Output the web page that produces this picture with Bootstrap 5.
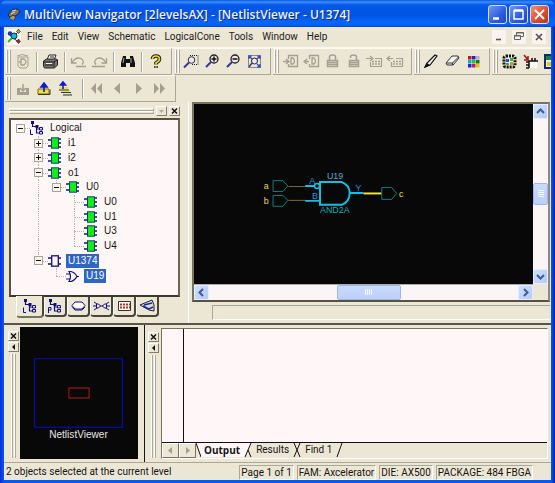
<!DOCTYPE html>
<html lang="en">
<head>
<meta charset="utf-8">
<meta name="viewport" content="width=device-width, initial-scale=1">
<title>MultiView Navigator</title>
<link href="https://cdn.jsdelivr.net/npm/bootstrap@5.3.0/dist/css/bootstrap.min.css" rel="stylesheet">
<style>
:root{--face:#ece6d5;--paper:#fff7f7;--ink:#0a0a0a;--lo:#aca899;--frame:#0a3fe0}
body{font:10px/12px Roboto,"Liberation Sans",sans-serif;color:#151515;background:#0650e8;min-height:100vh}
button{font:inherit;color:inherit;background:none;border:0;padding:0}
svg{display:block;flex:none}
.shell{min-height:100vh;padding:0 4px 3px;border-radius:7px 7px 0 0;background:linear-gradient(90deg,#0030d8 0,#0a58f0 4px,#0a58f0 calc(100% - 4px),#0020b0 100%);border-bottom:0}
.titlebar{height:27px;margin:0 -4px;padding:2px 6px 0 7px;background:linear-gradient(#0a58d8 0,#3a8cff 2px,#0458e8 5px,#0054e4 15px,#0566fa 22px,#0563f4 25px,#0040c8 27px);border-radius:7px 7px 0 0}
.titlebar h1{font:600 12px/16px "Open Sans",sans-serif;color:#eef2fb;text-shadow:1px 1px #0a2a80;margin:0 0 0 3px}
.wbtns{gap:2px}
.wbtn{width:19px;height:19px;border:1px solid #d5e0f8;border-radius:3px;background:linear-gradient(135deg,#7098f0,#2a5ce0 60%,#2048c8)}
.wbtn.end{background:linear-gradient(135deg,#f09078,#dc4a28 60%,#b83818)}
.client{background:var(--face)}
.menurow{height:20px;padding:0 5px 1px 3px}
.menurow nav{gap:9px;margin-left:6px}
.menurow a{color:#222;text-decoration:none}
.mdi{gap:6px}
.mdi button{width:14px;height:14px;background:#f9f3ef}
.bars{border-top:1px solid #fbf8f0}
.band{height:27px;gap:2px;padding-left:1px}
.tgroup{padding-right:5px;border-right:1px solid var(--lo);border-bottom:1px solid var(--lo);border-top:1px solid #fdfaf4}
.grip{width:7px;padding:1px;gap:1px}
.grip i{width:3px;border-left:1px solid #fff;border-right:1px solid var(--lo)}
.tb{width:21px;height:21px}
.tb:disabled{color:#a3a091}
.vsep{width:7px}
.vsep::before{content:"";display:block;width:2px;height:20px;margin:0 auto;border-left:1px solid var(--lo);border-right:1px solid #fff}
.work{flex:1 0 216px}
.dock{width:185px;flex:none;border-right:1px solid #fff;padding:2px 8px 3px 5px}
.dockhead{height:13px;gap:2px}
.hgrip{height:3px;border:1px solid var(--lo);border-top-color:#fff;border-left-color:#fff}
.mini{width:11px;height:10px;border:1px solid #fff;border-right-color:#817d70;border-bottom-color:#817d70;background:var(--face)}
.tree{flex:1;border:1px solid var(--lo);border-top:2px solid #55523f;border-left:2px solid #55523f;border-right:2px solid #6b6757;border-bottom:2px solid #3c392c;background:var(--paper);font-family:"Liberation Sans",sans-serif;padding:1px 0 12px 1px;margin:1px 0 0}
.tree li{flex:1;min-height:14px}
.cell{width:18px;flex:none;align-self:stretch;position:relative;display:flex;align-items:center}
.cell.v::before,.cell.e::before{content:"";position:absolute;left:8px;top:0;bottom:0;border-left:1px dotted #b9b5ae}
.cell.e::before{bottom:50%}
.cell.h::after{content:"";position:absolute;left:8px;right:0;top:50%;border-top:1px dotted #b9b5ae}
.exp{position:absolute;left:4px;top:3px;width:9px;height:9px;border:1px solid #a9a596;background:#faf5ee;z-index:1}
.exp::before{content:"";position:absolute;left:1px;top:3px;width:5px;height:1px;background:#111}
.exp.plus::after{content:"";position:absolute;left:3px;top:1px;width:1px;height:5px;background:#111}
.lbl{padding:1px 2px}
.lbl.sel{background:#2f66c4;color:#fff}
.ptabs{padding-left:7px;height:23px}
.ptabs button{width:23px;height:20px;border-right:2px solid #4a473a;border-bottom:2px solid #4a473a;border-left:1px solid #fff;border-radius:0 0 4px 4px}
.ptabs button.on{width:28px;height:22px;margin-top:-1px;background:var(--face);border-bottom-color:#77735f}
.ptabs button svg{margin:auto}
.viewer{padding:0 0 0 3px}
.screen{flex:1;margin-right:1px;border:2px solid #77735f;border-right-color:#8f8b7c;border-bottom-color:#55523f;background:var(--face)}
.canvas{background:#080808;min-height:0;min-width:0;flex:1;position:relative}
.canvas svg{position:absolute;inset:0;width:100%;height:100%}
.sbar{background:#fbf5f5}
.sbar.vert{width:15px}
.sbar.hor{height:16px;margin-right:15px;border-top:1px solid #aaa}
.before{flex:11 0 0}
.after{flex:10 0 0}
.sb{width:15px;height:15px;flex:none;border:1px solid #e4ecff;border-radius:2px;background:linear-gradient(135deg,#cfdeff,#b4cbfb)}
.thumb{background:linear-gradient(#c9d9ff,#bdd0fb);border:1px solid #9db6ee;border-radius:2px;flex:none}
.pathfield{height:15px;margin:3px 1px 3px 20px;border:1px solid var(--lo);border-right:0;border-bottom-color:#fff}
.lower{flex:0 0 138px;border-top:2px solid #57554c}
.sidegrip{width:11px;flex:none;gap:1px}
.nav-pane{width:141px;flex:none;padding:2px 6px 3px 4px;border-right:1px solid #151515}
.radar{background:#080808;margin-left:1px}
.radar svg{width:100%;height:100%}
.log-pane{padding:3px 3px 3px 3px}
.logbox{border:1px solid #77735f;border-right-color:#fff;border-bottom-color:#fff;margin-left:2px}
.logtext{background:var(--paper);border-bottom:1px solid #111}
.gutter{width:22px;border-right:1px solid #111}
.logtext textarea{resize:none;border:0;background:none;outline:0;padding:2px}
.otabs{height:15px}
.otabs .nb{width:17px;border:1px solid #fff;border-right-color:#77735f;border-bottom-color:#77735f;color:#a3a091}
.otabs .ot{height:14px;padding:0 3px}
.otabs .ot.on{background:var(--paper);font:700 10px/12px "Open Sans",sans-serif}
.status{height:18px;border-top:1px solid var(--lo);padding:1px 18px 0 2px;gap:3px}
.status output{border:1px solid var(--lo);border-right-color:#fff;border-bottom-color:#fff;padding:0 1px;height:15px;line-height:13px;white-space:nowrap}
</style>
<script src="https://cdn.jsdelivr.net/npm/bootstrap@5.3.0/dist/js/bootstrap.bundle.min.js"></script>
</head>
<body>
<svg width="0" height="0" class="position-absolute" aria-hidden="true">
  <symbol id="chip" viewBox="0 0 14 12"><path d="M0 3h4M0 9h4M10 2h3M10 6h3M10 10h3" stroke="#10107c" stroke-width="1.6"/><rect x="3.5" y=".8" width="7" height="10.4" fill="#12ee12" stroke="#10407c"/></symbol>
  <symbol id="gchip" viewBox="0 0 14 12"><path d="M0 3h4M0 9h4M10 3h3M10 9h3" stroke="#10107c" stroke-width="1.4"/><rect x="3.7" y=".8" width="6.6" height="10.4" fill="#fff7f7" stroke="#10107c" stroke-width="1.3"/></symbol>
  <symbol id="tiers" viewBox="0 0 14 14"><path d="M2.500 2v3.500h4V12H10M6.500 8H10" fill="none" stroke="#10107c" stroke-width="1.2"/><path d="M1 0h3v3H1zM5.500 4h3v3h-3z" fill="#10107c"/><path d="M9.500 6.500h3v2.500h-3zM9.500 10.500h3V13h-3z" fill="#dde" stroke="#10107c"/></symbol>
  <symbol id="hier" viewBox="0 0 14 14"><use href="#tiers"/><path d="M.5 8.500v5H3" fill="none" stroke="#10107c"/></symbol>
  <symbol id="phys" viewBox="0 0 14 14"><use href="#tiers"/><path d="M.5 14V8.500H3V11H.5" fill="none" stroke="#10107c"/></symbol>
</svg>
<div class="shell d-flex flex-column">
  <header class="titlebar d-flex align-items-center">
    <svg width="14" height="15" viewBox="0 0 14 15"><path d="M1 8l4-5 5-1 3 2-3 4-6 3z" fill="#7d7766" stroke="#2c2a28"/><path d="M2 11l4-3 3 2-2 3" fill="#b49a60" stroke="#333"/><path d="M5 4l4-1M4 7l4-2" stroke="#ddd"/></svg>
    <h1 class="flex-grow-1 text-nowrap">MultiView Navigator [2levelsAX] - [NetlistViewer - U1374]</h1>
    <div class="wbtns d-flex">
      <button class="wbtn" aria-label="Minimize"><svg width="17" height="17"><path d="M4 12.500h6" stroke="#fff" stroke-width="2.500"/></svg></button>
      <button class="wbtn" aria-label="Maximize"><svg width="17" height="17"><path d="M4 5h9v8H4zM4 4h9" fill="none" stroke="#fff" stroke-width="1.500"/></svg></button>
      <button class="wbtn end" aria-label="Close"><svg width="17" height="17"><path d="M4 4l9 9M13 4l-9 9" stroke="#fff" stroke-width="2"/></svg></button>
    </div>
  </header>
  <div class="client d-flex flex-column flex-grow-1">
    <div class="menurow d-flex align-items-center">
      <svg width="14" height="16" viewBox="0 0 14 16"><path fill="#fdfaf6" d="M0 0h14v16H0z"/><path d="M1 13l11-11M2 5l9 8" stroke="#222"/><path d="M1 13l5-5" stroke="#1c1" stroke-width="2"/><circle cx="3" cy="4.500" r="2.300" fill="#1838c0"/><circle cx="7" cy="7" r="3" fill="#18b8d8" stroke="#135"/><path d="M11.500 0l2 2.500-2 2-2-2z" fill="#b8a020" stroke="#222" stroke-width=".6"/><path d="M11.500 10l2 2.500-2 2-2-2z" fill="#c01818" stroke="#222" stroke-width=".6"/></svg>
      <nav class="d-flex flex-grow-1"><a href="#">File</a><a href="#">Edit</a><a href="#">View</a><a href="#">Schematic</a><a href="#">LogicalCone</a><a href="#">Tools</a><a href="#">Window</a><a href="#">Help</a></nav>
      <div class="mdi d-flex">
        <button aria-label="Minimize document"><svg width="14" height="14"><path d="M4 9.500h5" stroke="#555" stroke-width="1.600"/></svg></button>
        <button aria-label="Restore document"><svg width="14" height="14"><path d="M4.500 5V2.500h7v4H9M2.500 5.500h6v4h-6zM4 3h8M2 6h7" fill="none" stroke="#66645c"/></svg></button>
        <button aria-label="Close document"><svg width="14" height="14"><path d="M4 4l6 6M10 4l-6 6" stroke="#55534c" stroke-width="1.700"/></svg></button>
      </div>
    </div>
    <div class="bars overflow-hidden">
      <div class="band d-flex" role="toolbar" aria-label="Standard">
        <div class="tgroup d-flex align-items-center flex-shrink-0"><span class="grip d-flex align-self-stretch"><i></i><i></i></span>
          <button class="tb" disabled aria-label="Commit"><svg width="21" height="21" fill="none" stroke="currentColor"><path d="M6 6h10v9l-2 2H8l-2-2zM5 5q5-3 11 0"/><path d="M9 8h3q2 1.500 2 3t-2 3H9zM9 11H7" stroke-width="1.300"/></svg></button><span class="vsep"></span>
          <button class="tb" aria-label="Print"><svg width="21" height="21" stroke="#222"><path d="M7 9l2-5h7l-2 5" fill="#fff"/><path d="M3.500 10l3-2h10l1 1v5l-3 3h-10l-1-2z" fill="#77756c"/><path d="M4 11h10l3-2M14 11v5M5 14h8M10 6h4" fill="none"/><path d="M6 12.500h6" stroke="#eee"/></svg></button><span class="vsep"></span>
          <button class="tb" disabled aria-label="Undo"><svg width="21" height="21" fill="none" stroke="currentColor" stroke-width="1.300"><path d="M3.500 7v5h5M4 11.500q4-6 9-4 4 3 1 6M8 15.500h10"/></svg></button>
          <button class="tb" disabled aria-label="Redo"><svg width="21" height="21" fill="none" stroke="currentColor" stroke-width="1.300"><path d="M17.500 7v5h-5M17 11.500q-4-6-9-4-4 3-1 6M3 15.500h13"/></svg></button><span class="vsep"></span>
          <button class="tb" aria-label="Find"><svg width="21" height="21"><path d="M6 5h3v3h4V5h3l2 7v4h-5v-4h-4v4H4v-4z" fill="#111"/><path d="M7 7l-1 5M14 7v5" stroke="#aaa"/></svg></button><span class="vsep"></span>
          <button class="tb" aria-label="Help"><svg width="21" height="21" fill="none"><path d="M7.500 8q0-3 3.500-3t3.500 3q0 2-3.500 4v1.500M11 15v2" stroke="#222" stroke-width="3.600"/><path d="M7.500 8q0-3 3.500-3t3.500 3q0 2-3.500 4v1.500M11 15.200v1.500" stroke="#e8dc20" stroke-width="1.600"/></svg></button>
        </div>
        <div class="tgroup d-flex align-items-center flex-shrink-0"><span class="grip d-flex align-self-stretch"><i></i><i></i></span>
          <button class="tb" aria-label="Zoom area"><svg width="21" height="21" fill="none"><path d="M9 4.500h8v9h-7" stroke="#222" stroke-dasharray="1 1"/><circle cx="10.500" cy="9" r="3.300" fill="#e8e8ee" stroke="#333"/><path d="M8 11.500l-5 5" stroke="#34389c" stroke-width="2"/></svg></button>
          <button class="tb" aria-label="Zoom in"><svg width="21" height="21" fill="none"><circle cx="12" cy="8" r="4" fill="#e8e8ee" stroke="#222" stroke-width="1.300"/><path d="M9.500 8h5M12 5.500v5" stroke="#111" stroke-width="1.500"/><path d="M9 11l-5 5" stroke="#34389c" stroke-width="2"/></svg></button>
          <button class="tb" aria-label="Zoom out"><svg width="21" height="21" fill="none"><circle cx="12" cy="8" r="4" fill="#e8e8ee" stroke="#222" stroke-width="1.300"/><path d="M9.500 8h5" stroke="#111" stroke-width="1.500"/><path d="M9 11l-5 5" stroke="#34389c" stroke-width="2"/></svg></button>
          <button class="tb" aria-label="Zoom to fit"><svg width="21" height="21" fill="none"><path d="M4.500 4.500h12v12h-12z" stroke="#333" stroke-dasharray="1 1"/><path d="M5 8V5h3M13 5h3v3M16 13v3h-3M5 5l3 3M16 5l-3 3M16 16l-3-3" stroke="#2446c8" stroke-width="1.200"/><circle cx="10.500" cy="10" r="3" fill="#e8e8ee" stroke="#222"/><path d="M8 12l-3 4" stroke="#34389c" stroke-width="1.600"/></svg></button>
        </div>
        <div class="tgroup d-flex align-items-center flex-shrink-0"><span class="grip d-flex align-self-stretch"><i></i><i></i></span>
          <button class="tb" disabled aria-label="Push down"><svg width="21" height="21" fill="none" stroke="currentColor"><path d="M8.500 8V4.500h9v11h-9V13M3 10.500h5M6 8l3 2.500L6 13M11 7h2q3 3.500 0 6h-2z" stroke-width="1.300"/></svg></button>
          <button class="tb" disabled aria-label="Pop up"><svg width="21" height="21" fill="none" stroke="currentColor"><path d="M8.500 8V4.500h9v11h-9V13M3 10.500h5M6 8l-3 2.500L6 13M11 7h2q3 3.500 0 6h-2z" stroke-width="1.300"/></svg></button>
          <button class="tb" disabled aria-label="Lock"><svg width="21" height="21" fill="none" stroke="currentColor"><path d="M7.500 9V6q0-2 3-2t3 2v3M5.500 9.500h10v6h-10zM6 11.500h9M6 13.500h9" stroke-width="1.500"/></svg></button>
          <button class="tb" disabled aria-label="Unlock"><svg width="21" height="21" fill="none" stroke="currentColor"><path d="M7.500 7V6q0-2 3-2t3 2v3M6.500 9.500h9v6h-9zM7 11.500h8M7 13.500h8" stroke-width="1.500"/></svg></button>
          <button class="tb" disabled aria-label="Add to list"><svg width="21" height="21" fill="none" stroke="currentColor"><path d="M2 7.500h6M6 5l3 2.500L6 10M11 7.500h6.500v8h-11V11" stroke-width="1.200"/><path d="M8 10.500h8M8 13h8" stroke-width="1.500" stroke-dasharray="2 1"/></svg></button>
          <button class="tb" disabled aria-label="Remove from list"><svg width="21" height="21" fill="none" stroke="currentColor"><path d="M2 7.500h6M5 5L2 7.500 5 10M11 7.500h6.500v8h-11V11" stroke-width="1.200"/><path d="M8 10.500h8M8 13h8" stroke-width="1.500" stroke-dasharray="2 1"/></svg></button>
        </div>
        <div class="tgroup d-flex align-items-center flex-shrink-0"><span class="grip d-flex align-self-stretch"><i></i><i></i></span>
          <button class="tb" aria-label="Highlight"><svg width="21" height="21"><path d="M4 16l2-4 8-8 2 1-7 9z" fill="#f4f0ea" stroke="#111" stroke-width="1.200"/><path d="M3 17l3-5 3 2z" fill="#111"/></svg></button>
          <button class="tb" aria-label="Erase"><svg width="21" height="21"><path d="M4 12l6-7h6l1 2-6 7H5z" fill="#f8f4ee" stroke="#333"/><path d="M4.500 12h6l6-6M10.500 12v2" fill="none" stroke="#333"/></svg></button>
          <button class="tb" aria-label="Colours"><svg width="21" height="21"><path fill="#c01818" d="M5 5h3.500v3.500H5z"/><path fill="#1828d0" d="M9 5h3.500v3.500H9z"/><path fill="#c8a0d8" d="M13 5h3.500v3.500H13z"/><path fill="#18a8d0" d="M5 9h3.500v3.500H5z"/><path fill="#20c820" d="M9 9h3.500v3.500H9z"/><path fill="#187818" d="M13 9h3.500v3.500H13z"/><path fill="#1828d0" d="M5 13h3.500v3.500H5z"/><path fill="#c81860" d="M9 13h3.500v3.500H9z"/><path fill="#e0c020" d="M13 13h3.500v3.500H13z"/></svg></button>
        </div>
        <div class="tgroup d-flex align-items-center flex-shrink-0 border-end-0"><span class="grip d-flex align-self-stretch"><i></i><i></i></span>
          <button class="tb" aria-label="Chip view"><svg width="21" height="21"><rect x="5" y="5" width="11" height="11" rx="2" fill="#f4ecd8" stroke="#111" stroke-width="3" stroke-dasharray="2 1"/><path fill="#2050d0" d="M7 8h3v3H7z"/><path fill="#20b840" d="M11 7h3v3h-3zM7 12h3v2H7z"/><path fill="#e09020" d="M11 11h3v3h-3z"/></svg></button>
          <button class="tb" aria-label="Cross probe"><svg width="21" height="21" fill="none"><path d="M4 4l4 5M8 5v4H4" stroke="#a81818" stroke-width="1.600"/><path d="M9 10h8v7H9z" fill="#fffafa"/><path d="M9 17v-7h9M6 11h3M6 14h3M6 17h3M12 7v3M15 7v3" stroke="#111" stroke-width="1.500"/></svg></button>
          <button class="tb" aria-label="Floorplan"><svg width="21" height="21"><path fill="#eee" stroke="#112a70" stroke-width="2" d="M4 4h14v13H4z"/><path fill="#208030" d="M5 5h6v4H5z"/><path fill="#e0c820" d="M6 11h5v4H6z"/></svg></button>
        </div>
      </div>
      <div class="band d-flex" role="toolbar" aria-label="Navigation">
        <div class="tgroup d-flex align-items-center flex-shrink-0"><span class="grip d-flex align-self-stretch"><i></i><i></i></span>
          <button class="tb" disabled aria-label="Descend"><svg width="21" height="21"><path d="M5 10h3v4h6v-4h3v7H5z" fill="currentColor"/><path d="M11 6v6M8 10l3 3 3-3" fill="none" stroke="currentColor" stroke-width="1.500"/></svg></button>
          <button class="tb" aria-label="Ascend"><svg width="21" height="21"><path d="M5 11h11v5H5z" fill="#f0e040" stroke="#776a20"/><path d="M5 16.500h12v-5" fill="none" stroke="#333"/><path d="M11 14V6M8 9l3-4 3 4z" fill="#1018d0" stroke="#1018d0" stroke-width="1.600"/></svg></button>
          <button class="tb" aria-label="Ascend to top"><svg width="21" height="21"><path d="M5 9h9v3H5zM7 12.500h9v2H7zM9 15.500h9v2H9z" fill="#f0e040"/><path d="M5 12h10M7 14.500h10M9 17h9" stroke="#223a80"/><path d="M9 11V5M6.500 7L9 4l2.500 3z" fill="#1018d0" stroke="#1018d0" stroke-width="1.600"/></svg></button><span class="vsep ms-1"></span>
          <button class="tb" disabled aria-label="First page"><svg width="21" height="21" fill="currentColor"><path d="M10 5v11l-5-5.500zM16 5v11l-5-5.500z"/></svg></button>
          <button class="tb" disabled aria-label="Previous page"><svg width="21" height="21" fill="currentColor"><path d="M13 5v11l-6-5.500z"/></svg></button>
          <button class="tb" disabled aria-label="Next page"><svg width="21" height="21" fill="currentColor"><path d="M8 5v11l6-5.500z"/></svg></button>
          <button class="tb" disabled aria-label="Last page"><svg width="21" height="21" fill="currentColor"><path d="M5 5v11l5-5.500zM11 5v11l5-5.500z"/></svg></button>
        </div>
      </div>
    </div>
    <main class="work d-flex">
      <aside class="dock d-flex flex-column">
        <div class="dockhead d-flex align-items-center">
          <div class="flex-grow-1"><div class="hgrip"></div><div class="hgrip"></div></div>
          <button class="mini" aria-label="Dock menu"><svg width="9" height="8"><path d="M2 3h5L4.500 6z" fill="#b0ac9e"/></svg></button>
          <button class="mini" aria-label="Close dock"><svg width="9" height="8"><path d="M2 1.500l5 5M7 1.500l-5 5" stroke="#111" stroke-width="1.500"/></svg></button>
        </div>
        <ul class="tree list-unstyled d-flex flex-column" role="tree">
          <li class="d-flex align-items-center"><span class="cell h"><i class="exp"></i></span><span class="cell"><svg width="14" height="14"><use href="#hier"/></svg></span><span class="lbl">Logical</span></li>
          <li class="d-flex align-items-center"><span class="cell"></span><span class="cell v h"><i class="exp plus"></i></span><span class="cell"><svg width="14" height="12"><use href="#chip"/></svg></span><span class="lbl">i1</span></li>
          <li class="d-flex align-items-center"><span class="cell"></span><span class="cell v h"><i class="exp plus"></i></span><span class="cell"><svg width="14" height="12"><use href="#chip"/></svg></span><span class="lbl">i2</span></li>
          <li class="d-flex align-items-center"><span class="cell"></span><span class="cell v h"><i class="exp"></i></span><span class="cell"><svg width="14" height="12"><use href="#chip"/></svg></span><span class="lbl">o1</span></li>
          <li class="d-flex align-items-center"><span class="cell"></span><span class="cell v"></span><span class="cell e h"><i class="exp"></i></span><span class="cell"><svg width="14" height="12"><use href="#chip"/></svg></span><span class="lbl">U0</span></li>
          <li class="d-flex align-items-center"><span class="cell"></span><span class="cell v"></span><span class="cell"></span><span class="cell v h"></span><span class="cell"><svg width="14" height="12"><use href="#chip"/></svg></span><span class="lbl">U0</span></li>
          <li class="d-flex align-items-center"><span class="cell"></span><span class="cell v"></span><span class="cell"></span><span class="cell v h"></span><span class="cell"><svg width="14" height="12"><use href="#chip"/></svg></span><span class="lbl">U1</span></li>
          <li class="d-flex align-items-center"><span class="cell"></span><span class="cell v"></span><span class="cell"></span><span class="cell v h"></span><span class="cell"><svg width="14" height="12"><use href="#chip"/></svg></span><span class="lbl">U3</span></li>
          <li class="d-flex align-items-center"><span class="cell"></span><span class="cell v"></span><span class="cell"></span><span class="cell e h"></span><span class="cell"><svg width="14" height="12"><use href="#chip"/></svg></span><span class="lbl">U4</span></li>
          <li class="d-flex align-items-center"><span class="cell"></span><span class="cell e h"><i class="exp"></i></span><span class="cell"><svg width="14" height="12"><use href="#gchip"/></svg></span><span class="lbl sel">U1374</span></li>
          <li class="d-flex align-items-center"><span class="cell"></span><span class="cell"></span><span class="cell e h"></span><span class="cell"><svg width="14" height="12"><path d="M0 4h4M0 9h4M10 6.500h3" stroke="#10107c"/><path d="M3 1.500h2q4 1 6 5-2 4-6 5H3q3-5 0-10z" fill="#fff7f7" stroke="#10107c" stroke-width="1.200"/></svg></span><span class="lbl sel">U19</span></li>
        </ul>
        <div class="ptabs d-flex">
          <button class="on" aria-label="Logical"><svg width="14" height="14"><use href="#hier"/></svg></button>
          <button aria-label="Physical"><svg width="14" height="14"><use href="#phys"/></svg></button>
          <button aria-label="Ports"><svg width="17" height="12"><path d="M5 2h7l3 3.500L12 9H5L2 5.500z" fill="#fff" stroke="#10107c"/><path d="M2 6.500L5 10h7l3-3" fill="none" stroke="#10107c"/></svg></button>
          <button aria-label="Nets"><svg width="17" height="12"><path d="M0 6h3M14 6h3M3.500 4v4l2 0 2-2-2-2zM13.500 4v4l-2 0-2-2 2-2zM7 6h3M1 2l3 2M1 10l3-2M16 2l-3 2M16 10l-3-2" fill="none" stroke="#10107c"/></svg></button>
          <button aria-label="Regions"><svg width="15" height="12"><path d="M1.500 1.500h12v9h-12z" fill="#fff" stroke="#333"/><path d="M3 4.500h10M3 7.500h10" stroke="#b03018" stroke-width="2" stroke-dasharray="2 1"/></svg></button>
          <button aria-label="Find view"><svg width="17" height="14"><path d="M1 6L13 1l2 5v6l-5-1z" fill="#ddd" stroke="#222"/><path d="M5 6l8-2M4 7l6 3 4-2" stroke="#1c2c9c" stroke-width="1.500" fill="none"/></svg></button>
        </div>
      </aside>
      <section class="viewer flex-grow-1 d-flex flex-column">
        <div class="screen d-flex flex-column">
          <div class="d-flex flex-grow-1">
            <div class="canvas">
              <svg viewBox="0 0 340 182" fill="none" font-family="Liberation Sans, sans-serif" font-size="9">
                <g stroke="#0f7f78"><path d="M78.500 77.500h10l5 5.500-5 5.500h-10zM78.500 92.500h10l5 5-5 6h-10zM188.500 84.500h10l5 6-5 6h-10z"/></g>
                <path d="M94 83.500h18M94 97.500h18" stroke="#77702a"/>
                <g stroke="#12c0e4" stroke-width="2"><path d="M111 83h10M111 98h14M156 90h14"/><circle cx="123" cy="83" r="2.500" stroke-width="1.500"/><path d="M126 79h22q8 3 8 11 0 9-8 12h-22z"/></g>
                <path d="M170 90.500h18" stroke="#f0e040" stroke-width="2"/>
                <g fill="#e8d860" stroke="none"><text x="69" y="86">a</text><text x="69" y="101">b</text><text x="206" y="94">c</text></g>
                <g fill="#1899d8" stroke="none"><text x="115" y="81">A</text><text x="118" y="96">B</text><text x="162" y="88">Y</text></g>
                <text x="133" y="76" fill="#5ba8cc">U19</text><text x="126" y="110" fill="#12b0b8">AND2A</text>
              </svg>
            </div>
            <div class="sbar vert d-flex flex-column align-items-center">
              <button class="sb" aria-label="Scroll up"><svg width="13" height="13"><path d="M3 8l3.500-3.500L10 8" fill="none" stroke="#3f5b94" stroke-width="2"/></svg></button>
              <div class="flex-grow-1"></div><div class="thumb w-100"><svg width="13" height="20"><path d="M4 6.500h6M4 8.500h6M4 10.500h6M4 12.500h6" stroke="#f4f8ff"/></svg></div><div class="flex-grow-1"></div>
              <button class="sb" aria-label="Scroll down"><svg width="13" height="13"><path d="M3 5l3.500 3.500L10 5" fill="none" stroke="#3f5b94" stroke-width="2"/></svg></button>
            </div>
          </div>
          <div class="sbar hor d-flex">
            <button class="sb" aria-label="Scroll left"><svg width="13" height="13"><path d="M8 3L4.500 6.500 8 10" fill="none" stroke="#3f5b94" stroke-width="2"/></svg></button>
            <div class="before"></div><div class="thumb"><svg width="62" height="13"><path d="M27.500 3v6M29.500 3v6M31.500 3v6M33.500 3v6" stroke="#f4f8ff"/></svg></div><div class="after"></div>
            <button class="sb" aria-label="Scroll right"><svg width="13" height="13"><path d="M5 3l3.500 3.500L5 10" fill="none" stroke="#3f5b94" stroke-width="2"/></svg></button>
          </div>
        </div>
        <div class="pathfield"></div>
      </section>
    </main>
    <section class="lower d-flex">
      <div class="nav-pane d-flex">
        <div class="sidegrip d-flex flex-column align-items-center pt-1">
          <button class="mini" aria-label="Close overview"><svg width="9" height="8"><path d="M2 1.500l5 5M7 1.500l-5 5" stroke="#111" stroke-width="1.500"/></svg></button>
          <button class="mini" aria-label="Collapse overview"><svg width="9" height="8"><path d="M6 1v6L3 4z" fill="#111"/></svg></button>
          <span class="grip d-flex flex-grow-1"><i></i><i></i></span>
        </div>
        <div class="radar flex-grow-1"><svg viewBox="0 0 117 131" fill="none"><path d="M14.500 31.500h87v68h-87z" stroke="#0a0ac8"/><path d="M48.500 60.500h20v10h-20z" stroke="#b01818"/><text x="58" y="110" text-anchor="middle" fill="#e6e6e6" font-family="Liberation Sans, sans-serif" font-size="10">NetlistViewer</text></svg></div>
      </div>
      <div class="log-pane d-flex flex-grow-1">
        <div class="sidegrip d-flex flex-column align-items-center pt-1">
          <button class="mini" aria-label="Close log"><svg width="9" height="8"><path d="M2 1.500l5 5M7 1.500l-5 5" stroke="#111" stroke-width="1.500"/></svg></button>
          <button class="mini" aria-label="Collapse log"><svg width="9" height="8"><path d="M6 1v6L3 4z" fill="#111"/></svg></button>
          <span class="grip d-flex flex-grow-1"><i></i><i></i></span>
        </div>
        <div class="logbox flex-grow-1 d-flex flex-column">
          <div class="logtext flex-grow-1 d-flex"><span class="gutter"></span><textarea class="flex-grow-1" readonly aria-label="Output log"></textarea></div>
          <div class="otabs d-flex">
            <button class="nb" aria-label="Scroll tabs left"><svg width="15" height="13"><path d="M9 3v7L5 6.500z" fill="currentColor"/></svg></button>
            <button class="nb" aria-label="Scroll tabs right"><svg width="15" height="13"><path d="M6 3v7l4-3.500z" fill="currentColor"/></svg></button>
            <svg width="5" height="14"><path d="M0 0l5 14V0z" fill="#fff7f7"/><path d="M0 0l5 14" stroke="#111"/></svg>
            <button class="ot on">Output</button>
            <svg width="10" height="14"><path d="M0 0h8L2 14H0z" fill="#fff7f7"/><path d="M8 0L2 14M5 7l3 7" stroke="#111"/></svg>
            <button class="ot">Results</button>
            <svg width="10" height="14"><path d="M8 0L2 14M2 0l6 14" stroke="#111"/></svg>
            <button class="ot">Find 1</button>
            <svg width="8" height="14"><path d="M7 0L2 14" stroke="#111"/></svg>
          </div>
        </div>
      </div>
    </section>
    <footer class="status d-flex align-items-center">
      <span class="flex-grow-1 text-nowrap">2 objects selected at the current level</span>
      <output>Page 1 of 1</output><output>FAM: Axcelerator</output><output>DIE: AX500</output><output>PACKAGE: 484 FBGA</output>
    </footer>
  </div>
</div>
</body>
</html>
